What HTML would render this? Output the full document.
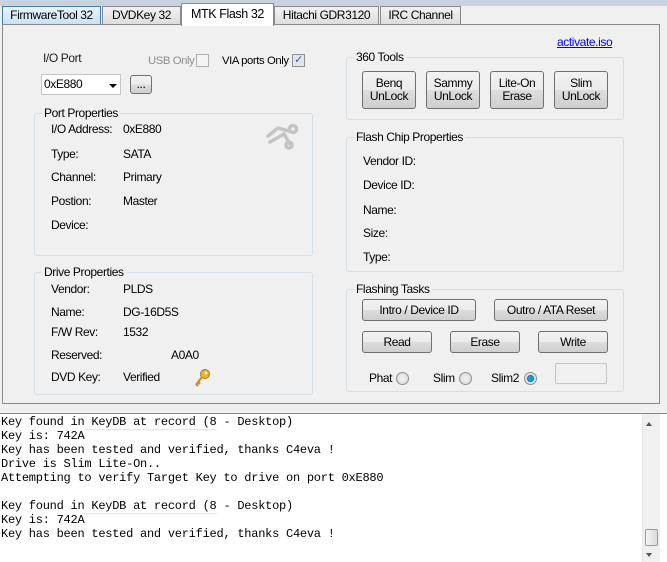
<!DOCTYPE html>
<html><head><style>
*{margin:0;padding:0;box-sizing:border-box}
body{width:667px;height:562px;background:#f0f0f0;font-family:"Liberation Sans",sans-serif;font-size:12px;color:#000;position:relative;overflow:hidden;letter-spacing:-0.4px}
.a{position:absolute;white-space:nowrap}
.tab{position:absolute;top:6px;height:19px;border:1px solid #8a8a8a;border-bottom:none;background:linear-gradient(#f2f2f2,#dcdcdc);text-align:center;line-height:17px}
.gb{position:absolute;border:1px solid #d5dfe5;border-radius:3px}
.gl{position:absolute;top:-8px;left:7px;background:#f0f0f0;padding:0 2px;line-height:14px}
.btn{position:absolute;border:1px solid #707070;border-radius:3px;background:linear-gradient(#f2f2f2 0%,#ebebeb 50%,#dddddd 50%,#cfcfcf 100%);text-align:center;line-height:13px;display:flex;align-items:center;justify-content:center}
.rad{position:absolute;width:13px;height:13px;border-radius:50%;border:1px solid #8e8f8f;background:radial-gradient(#f4f4f4,#d4d4d4)}
pre.a{font-family:"Liberation Mono",monospace;font-size:12px;line-height:14px;letter-spacing:-0.25px;white-space:pre}
</style></head><body>
<div class="a" style="left:0;top:0;width:667px;height:6px;background:#c9d3de"></div>
<div class="tab" style="left:2px;width:99px;background:linear-gradient(#eaf4fb,#c6e1f5);border-color:#3c7fb1">FirmwareTool 32</div>
<div class="tab" style="left:102px;width:79px">DVDKey 32</div>
<div class="tab" style="left:274px;width:105px">Hitachi GDR3120</div>
<div class="tab" style="left:380px;width:81px">IRC Channel</div>
<div class="a" style="left:2px;top:24px;width:658px;height:380px;border:1px solid #8a8a8a;background:#f0f0f0"></div>
<div class="a" style="left:181px;top:3px;width:93px;height:23px;background:#fff;border:1px solid #8a8a8a;border-bottom:none;text-align:center;line-height:21px;font-size:12.5px">MTK Flash 32</div>

<div class="a" style="left:43px;top:51px;color:#222">I/O Port</div>
<div class="a" style="left:148px;top:55px;color:#8d8d8d;font-size:11.3px">USB Only</div>
<div class="a" style="left:196px;top:54px;width:13px;height:13px;border:1px solid #b0b0b0;background:#f4f4f4"></div>
<div class="a" style="left:222px;top:55px;font-size:11.3px">VIA ports Only</div>
<div class="a" style="left:292px;top:54px;width:13px;height:13px;border:1px solid #8e8f8f;background:#e0e6f0;color:#4a5f97;font-size:11px;line-height:11px;text-align:center">✓</div>
<div class="a" style="left:41px;top:74px;width:80px;height:21px;border:1px solid #c5c5c5;background:#fff;padding-left:2px;line-height:19px">0xE880</div>
<div class="a" style="left:109px;top:84px;border-left:4px solid transparent;border-right:4px solid transparent;border-top:4px solid #000"></div>
<div class="btn" style="left:130px;top:75px;width:22px;height:19px">...</div>

<div class="gb" style="left:34px;top:113px;width:279px;height:143px"><div class="gl">Port Properties</div></div>
<svg class="a" style="left:264px;top:122px" width="36" height="30" viewBox="0 0 36 30"><g fill="none" stroke="#c4c4c4" stroke-width="3.5" stroke-linecap="round"><path d="M4 14 L14 6 L28 10"/><path d="M6 20 L20 12 L26 22"/><circle cx="29" cy="7" r="3.5"/><circle cx="25" cy="23" r="3"/></g></svg>
<div class="a" style="left:51px;top:122px">I/O Address:</div><div class="a" style="left:123px;top:122px">0xE880</div>
<div class="a" style="left:51px;top:147px">Type:</div><div class="a" style="left:123px;top:147px">SATA</div>
<div class="a" style="left:51px;top:170px">Channel:</div><div class="a" style="left:123px;top:170px">Primary</div>
<div class="a" style="left:51px;top:194px">Postion:</div><div class="a" style="left:123px;top:194px">Master</div>
<div class="a" style="left:51px;top:218px">Device:</div>

<div class="gb" style="left:34px;top:272px;width:279px;height:123px"><div class="gl">Drive Properties</div></div>
<div class="a" style="left:51px;top:282px">Vendor:</div><div class="a" style="left:123px;top:282px">PLDS</div>
<div class="a" style="left:51px;top:305px">Name:</div><div class="a" style="left:123px;top:305px">DG-16D5S</div>
<div class="a" style="left:51px;top:325px">F/W Rev:</div><div class="a" style="left:123px;top:325px">1532</div>
<div class="a" style="left:51px;top:348px">Reserved:</div><div class="a" style="left:171px;top:348px">A0A0</div>
<div class="a" style="left:51px;top:370px">DVD Key:</div><div class="a" style="left:123px;top:370px">Verified</div>
<svg class="a" style="left:193px;top:368px" width="18" height="20" viewBox="0 0 18 20"><circle cx="12" cy="6" r="4.5" fill="#e8b530" stroke="#a8761a"/><circle cx="13" cy="5" r="1.3" fill="#fff"/><path d="M9 9 L3 17 M5 14 L7 16 M3 16 L5 18" stroke="#c89020" stroke-width="2.2" fill="none"/></svg>

<div class="a" style="left:557px;top:35px;color:#0000ee;text-decoration:underline">activate.iso</div>
<div class="gb" style="left:346px;top:57px;width:278px;height:63px"><div class="gl">360 Tools</div></div>
<div class="btn" style="left:362px;top:71px;width:54px;height:38px">Benq<br>UnLock</div>
<div class="btn" style="left:426px;top:71px;width:54px;height:38px">Sammy<br>UnLock</div>
<div class="btn" style="left:490px;top:71px;width:54px;height:38px">Lite-On<br>Erase</div>
<div class="btn" style="left:554px;top:71px;width:54px;height:38px">Slim<br>UnLock</div>

<div class="gb" style="left:346px;top:137px;width:278px;height:135px"><div class="gl">Flash Chip Properties</div></div>
<div class="a" style="left:363px;top:154px">Vendor ID:</div>
<div class="a" style="left:363px;top:178px">Device ID:</div>
<div class="a" style="left:363px;top:203px">Name:</div>
<div class="a" style="left:363px;top:226px">Size:</div>
<div class="a" style="left:363px;top:250px">Type:</div>

<div class="gb" style="left:346px;top:289px;width:278px;height:103px"><div class="gl">Flashing Tasks</div></div>
<div class="btn" style="left:362px;top:299px;width:114px;height:22px">Intro / Device ID</div>
<div class="btn" style="left:494px;top:299px;width:114px;height:22px">Outro / ATA Reset</div>
<div class="btn" style="left:362px;top:331px;width:70px;height:22px">Read</div>
<div class="btn" style="left:450px;top:331px;width:70px;height:22px">Erase</div>
<div class="btn" style="left:538px;top:331px;width:70px;height:22px">Write</div>
<div class="a" style="left:369px;top:371px">Phat</div><div class="rad" style="left:396px;top:372px"></div>
<div class="a" style="left:433px;top:371px">Slim</div><div class="rad" style="left:459px;top:372px"></div>
<div class="a" style="left:491px;top:371px">Slim2</div><div class="rad" style="left:524px;top:372px;background:radial-gradient(#1a9ad8 0 2.5px,#0d5b8a 3px,#e8e8e8 4px,#d4d4d4)"></div>
<div class="a" style="left:555px;top:363px;width:52px;height:21px;border:1px solid #c5c5c5;border-radius:2px;background:#f0f0f0"></div>

<div class="a" style="left:0;top:413px;width:667px;height:149px;background:#fff;border-top:1px solid #828790"></div>
<pre class="a" style="left:1px;top:415px">Key found in KeyDB at record (8 - Desktop)
Key is: 742A<span style="color:#ccc">¯¯¯¯¯¯¯¯¯¯¯¯¯¯¯¯¯¯¯</span>
Key has been tested and verified, thanks C4eva !
Drive is Slim Lite-On..
Attempting to verify Target Key to drive on port 0xE880

Key found in KeyDB at record (8 - Desktop)
Key is: 742A<span style="color:#ccc">¯¯¯¯¯¯¯¯¯¯¯¯¯¯¯¯¯¯¯</span>
Key has been tested and verified, thanks C4eva !</pre>
<div class="a" style="left:642px;top:414px;width:18px;height:148px;background:#f0f0f0;border-left:1px solid #e6e6e6"></div>
<div class="a" style="left:646px;top:422px;border-left:3px solid transparent;border-right:3px solid transparent;border-bottom:4px solid #555"></div>
<div class="a" style="left:645px;top:529px;width:13px;height:17px;border:1px solid #9a9a9a;border-radius:2px;background:linear-gradient(90deg,#f3f3f3,#dcdcdc)"></div>
<div class="a" style="left:646px;top:553px;border-left:3px solid transparent;border-right:3px solid transparent;border-top:4px solid #555"></div>
</body></html>
